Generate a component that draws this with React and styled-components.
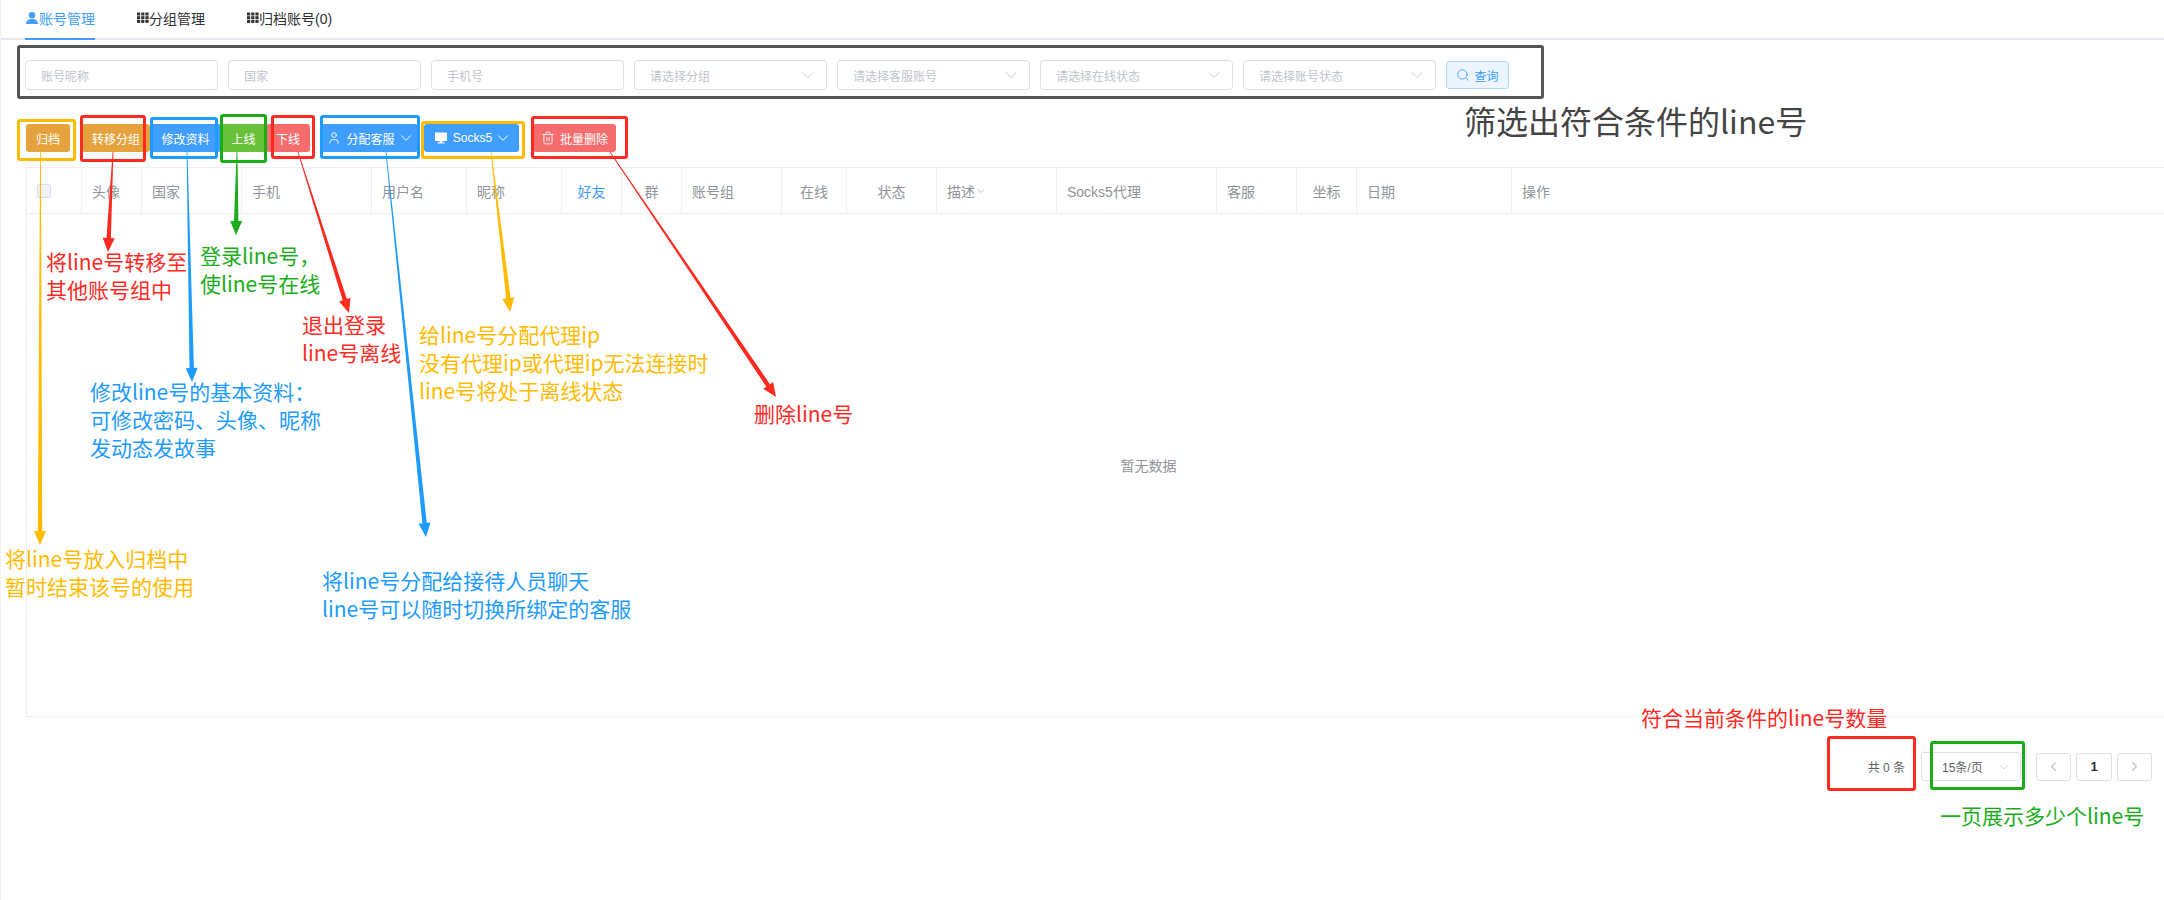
import React from "react";
import styled, { createGlobalStyle } from "styled-components";
import { ChevronDown, ChevronLeft, ChevronRight, Search, Trash2, User } from "lucide-react";

const GlobalStyle = createGlobalStyle`
  html, body {
    margin: 0;
    background: #fff;
  }
  body {
    font-family: "Liberation Sans", "Noto Sans CJK SC", sans-serif;
    overflow: hidden;
  }
  * {
    box-sizing: border-box;
  }
`;

const Page = styled.div`
  position: relative;
  width: 2164px;
  height: 900px;
  padding-left: 1px;
  box-shadow: inset 1px 0 0 #f0f1f4;
`;

const TabBar = styled.div`
  display: flex;
  height: 40px;
  padding-left: 24px;
  border-bottom: 2px solid #e4e7ed;
`;

const Tab = styled.div`
  display: flex;
  align-items: center;
  height: 40px;
  margin-right: 42px;
  padding-bottom: 2px;
  font-size: 14px;
  color: ${(p) => (p.$active ? "#409eff" : "#303133")};
  border-bottom: 2px solid ${(p) => (p.$active ? "#409eff" : "transparent")};
`;

const FilterRow = styled.div`
  display: grid;
  grid-template-columns: repeat(7, 192.5px) 63px;
  column-gap: 10.5px;
  height: 30px;
  margin: 20px 0 0 24px;
`;

const Field = styled.div`
  display: flex;
  align-items: center;
  justify-content: space-between;
  height: 30px;
  padding: 0 8px 0 15px;
  font-size: 12px;
  color: #c0c4cc;
  background: #fff;
  border: 1px solid #dcdfe6;
  border-radius: 4px;
`;

const QueryButton = styled.div`
  display: flex;
  align-items: center;
  justify-content: center;
  gap: 4px;
  height: 28px;
  margin-top: 1px;
  font-size: 12px;
  color: #409eff;
  background: #ecf5ff;
  border: 1px solid #b3d8ff;
  border-radius: 3px;
`;

const Toolbar = styled.div`
  display: flex;
  height: 28px;
  margin: 34px 0 0 25px;
`;

const colors = {
  warning: "#e6a23c",
  primary: "#409eff",
  success: "#67c23a",
  danger: "#f56c6c",
};

const ActionButton = styled.div`
  display: flex;
  align-items: center;
  justify-content: center;
  gap: ${(p) => p.$gap || 0}px;
  flex: none;
  width: ${(p) => p.$w}px;
  margin-left: ${(p) => p.$ml || 0}px;
  font-size: 12px;
  color: #fff;
  background: ${(p) => colors[p.$kind]};
  border-radius: 3px;
`;

const MenuArrow = styled(ChevronDown)`
  margin: 0 -3px;
`;

const TableHead = styled.div`
  display: flex;
  height: 47px;
  margin: 15px 0 0 25px;
  border-top: 1px solid #ebeef5;
  border-bottom: 1px solid #ebeef5;
  border-left: 1px solid #ebeef5;
`;

const HeadCell = styled.div`
  display: flex;
  align-items: center;
  justify-content: ${(p) => (p.$center ? "center" : "flex-start")};
  flex: ${(p) => (p.$w ? "none" : "1")};
  width: ${(p) => (p.$w ? `${p.$w}px` : "auto")};
  padding-left: ${(p) => (p.$center ? 0 : 10)}px;
  font-size: 14px;
  color: ${(p) => (p.$link ? "#409eff" : "#909399")};
  border-right: ${(p) => (p.$w ? "1px solid #ebeef5" : "none")};
`;

const CheckBox = styled.span`
  display: block;
  width: 14px;
  height: 14px;
  background: #edf2fc;
  border: 1px solid #dcdfe6;
  border-radius: 2px;
`;

const EmptyBody = styled.div`
  display: flex;
  align-items: center;
  justify-content: center;
  height: 503px;
  margin-left: 25px;
  padding-left: 106px;
  font-size: 14px;
  color: #909399;
  border-left: 1px solid #ebeef5;
  border-bottom: 1px solid #ebeef5;
`;

const Pager = styled.div`
  display: flex;
  align-items: center;
  justify-content: flex-end;
  height: 29px;
  margin-top: 35px;
  padding-right: 12px;
  font-size: 12px;
  color: #606266;
`;

const Total = styled.span`
  margin-right: 16px;
`;

const PageSize = styled.div`
  display: flex;
  align-items: center;
  justify-content: space-between;
  width: 100px;
  height: 29px;
  margin-right: 15px;
  padding: 0 8px 0 20px;
  border: 1px solid #dcdfe6;
  border-radius: 3px;
`;

const PageButton = styled.div`
  display: flex;
  align-items: center;
  justify-content: center;
  width: ${(p) => p.$w}px;
  height: 28px;
  margin-left: ${(p) => p.$ml || 0}px;
  font-size: 13px;
  font-weight: ${(p) => (p.$current ? 700 : 400)};
  color: ${(p) => (p.$current ? "#303133" : "#c0c4cc")};
  border: 1px solid #dcdfe6;
  border-radius: 3px;
`;

const Overlay = styled.div`
  position: absolute;
  inset: 0;
  pointer-events: none;
`;

const ArrowLayer = styled.svg`
  position: absolute;
  inset: 0;
`;

const Frame = styled.div`
  position: absolute;
  left: ${(p) => p.$x}px;
  top: ${(p) => p.$y}px;
  width: ${(p) => p.$w}px;
  height: ${(p) => p.$h}px;
  border: ${(p) => p.$b || 3}px solid ${(p) => p.$c};
  border-radius: 3px;
`;

const Note = styled.div`
  position: absolute;
  left: ${(p) => p.$x}px;
  top: ${(p) => p.$y}px;
  font-family: "Noto Sans CJK SC", "Liberation Sans", sans-serif;
  font-size: ${(p) => p.$size || 21}px;
  line-height: ${(p) => p.$lh || 28}px;
  color: ${(p) => p.$c};
  white-space: pre;
`;

const RED = "#ff2a1f";
const BLUE = "#1e9bff";
const AMBER = "#ffbb00";
const GREEN = "#1aad19";

const frames = [
  { x: 17, y: 45, w: 1527, h: 54, c: "#555555", b: 3 },
  { x: 17, y: 119, w: 59, h: 42, c: AMBER },
  { x: 80, y: 115, w: 66, h: 47, c: RED },
  { x: 150, y: 117, w: 68, h: 42, c: BLUE },
  { x: 220, y: 114, w: 47, h: 49, c: GREEN },
  { x: 271, y: 115, w: 44, h: 44, c: RED },
  { x: 320, y: 115, w: 100, h: 44, c: BLUE },
  { x: 421, y: 121, w: 104, h: 38, c: AMBER },
  { x: 531, y: 116, w: 97, h: 43, c: RED },
  { x: 1827, y: 736, w: 89, h: 55, c: RED },
  { x: 1930, y: 741, w: 95, h: 49, c: GREEN },
];

const notes = [
  { x: 46, y: 247, c: RED, text: "将line号转移至\n其他账号组中" },
  { x: 200, y: 241, c: GREEN, text: "登录line号，\n使line号在线" },
  { x: 302, y: 310, c: RED, text: "退出登录\nline号离线" },
  { x: 419, y: 320, c: AMBER, text: "给line号分配代理ip\n没有代理ip或代理ip无法连接时\nline号将处于离线状态" },
  { x: 90, y: 377, c: BLUE, text: "修改line号的基本资料：\n可修改密码、头像、昵称\n发动态发故事" },
  { x: 754, y: 399, c: RED, text: "删除line号" },
  { x: 5, y: 544, c: AMBER, text: "将line号放入归档中\n暂时结束该号的使用" },
  { x: 322, y: 566, c: BLUE, text: "将line号分配给接待人员聊天\nline号可以随时切换所绑定的客服" },
  { x: 1641, y: 703, c: RED, text: "符合当前条件的line号数量" },
  { x: 1940, y: 801, c: GREEN, text: "一页展示多少个line号" },
  { x: 1464, y: 98, c: "#444444", size: 32, lh: 44, text: "筛选出符合条件的line号" },
];

const arrows = [
  { from: [40.5, 152], to: [40, 545], c: AMBER },
  { from: [113, 152], to: [108, 252], c: RED },
  { from: [187, 152], to: [192, 382], c: BLUE },
  { from: [237, 152], to: [236, 235], c: GREEN },
  { from: [298, 152], to: [349, 313], c: RED },
  { from: [386, 152], to: [426, 537], c: BLUE },
  { from: [491, 152], to: [510, 312], c: AMBER },
  { from: [610, 152], to: [776, 397], c: RED },
];

// tapered shaft that thickens towards a triangular head
const arrowPoints = ({ from, to }) => {
  const [x1, y1] = from;
  const [x2, y2] = to;
  const len = Math.hypot(x2 - x1, y2 - y1);
  const ux = (x2 - x1) / len;
  const uy = (y2 - y1) / len;
  const nx = -uy;
  const ny = ux;
  const bx = x2 - ux * 14;
  const by = y2 - uy * 14;
  const pts = [
    [x1 + nx * 0.4, y1 + ny * 0.4],
    [bx + nx * 2.2, by + ny * 2.2],
    [bx + nx * 6, by + ny * 6],
    [x2, y2],
    [bx - nx * 6, by - ny * 6],
    [bx - nx * 2.2, by - ny * 2.2],
    [x1 - nx * 0.4, y1 - ny * 0.4],
  ];
  return pts.map((p) => p.join(",")).join(" ");
};

const columns = [
  { w: 55, check: true },
  { w: 60, label: "头像" },
  { w: 100, label: "国家" },
  { w: 130, label: "手机" },
  { w: 95, label: "用户名" },
  { w: 95, label: "昵称" },
  { w: 60, label: "好友", center: true, link: true },
  { w: 60, label: "群", center: true },
  { w: 100, label: "账号组" },
  { w: 65, label: "在线", center: true },
  { w: 90, label: "状态", center: true },
  { w: 120, label: "描述", sort: true },
  { w: 160, label: "Socks5代理" },
  { w: 80, label: "客服" },
  { w: 60, label: "坐标", center: true },
  { w: 155, label: "日期" },
  { label: "操作" },
];

const fields = ["账号昵称", "国家", "手机号"];
const selects = ["请选择分组", "请选择客服账号", "请选择在线状态", "请选择账号状态"];

const GridIcon = () => (
  <svg width="12" height="12" viewBox="0 0 12 12" fill="#303133">
    {[0, 4.2, 8.4].map((x) =>
      [0.5, 4.2, 7.9].map((y) => <rect key={`${x}-${y}`} x={x} y={y} width="3.2" height="3" />)
    )}
  </svg>
);

const UserIcon = () => (
  <svg width="14" height="14" viewBox="0 0 14 14" fill="#409eff">
    <circle cx="7" cy="4.2" r="3.2" />
    <path d="M1 13c0-3.4 2.6-5 6-5s6 1.600 6 5z" />
  </svg>
);

const MonitorIcon = () => (
  <svg width="14" height="14" viewBox="0 0 14 14" fill="#fff">
    <rect x="1" y="1.500" width="12" height="8.500" rx="0.8" />
    <rect x="5.500" y="10" width="3" height="1.800" />
    <rect x="3.500" y="11.500" width="7" height="1" />
  </svg>
);

const App = () => {
  return (
    <Page>
      <GlobalStyle />
      <TabBar>
        <Tab $active>
          <UserIcon />
          账号管理
        </Tab>
        <Tab>
          <GridIcon />
          分组管理
        </Tab>
        <Tab>
          <GridIcon />
          归档账号(0)
        </Tab>
      </TabBar>

      <FilterRow>
        {fields.map((text) => (
          <Field key={text}>{text}</Field>
        ))}
        {selects.map((text) => (
          <Field key={text}>
            {text}
            <ChevronDown size={20} strokeWidth={1} />
          </Field>
        ))}
        <QueryButton>
          <Search size={14} strokeWidth={1.5} />
          查询
        </QueryButton>
      </FilterRow>

      <Toolbar>
        <ActionButton $kind="warning" $w={44}>归档</ActionButton>
        <ActionButton $kind="warning" $w={68} $ml={12}>转移分组</ActionButton>
        <ActionButton $kind="primary" $w={71}>修改资料</ActionButton>
        <ActionButton $kind="success" $w={45}>上线</ActionButton>
        <ActionButton $kind="danger" $w={44}>下线</ActionButton>
        <ActionButton $kind="primary" $w={97} $ml={11} $gap={5}>
          <User size={14} strokeWidth={1.5} />
          分配客服
          <MenuArrow size={18} strokeWidth={1.3} />
        </ActionButton>
        <ActionButton $kind="primary" $w={95} $ml={6} $gap={5}>
          <MonitorIcon />
          Socks5
          <MenuArrow size={18} strokeWidth={1.3} />
        </ActionButton>
        <ActionButton $kind="danger" $w={83} $ml={14} $gap={5}>
          <Trash2 size={14} strokeWidth={1.5} />
          批量删除
        </ActionButton>
      </Toolbar>

      <TableHead>
        {columns.map((col, index) => (
          <HeadCell key={index} $w={col.w} $center={col.center} $link={col.link}>
            {col.check && <CheckBox />}
            {col.label}
            {col.sort && <ChevronDown size={12} strokeWidth={1} />}
          </HeadCell>
        ))}
      </TableHead>
      <EmptyBody>暂无数据</EmptyBody>

      <Pager>
        <Total>共 0 条</Total>
        <PageSize>
          15条/页
          <ChevronDown size={16} strokeWidth={1} color="#c0c4cc" />
        </PageSize>
        <PageButton $w={35}>
          <ChevronLeft size={15} />
        </PageButton>
        <PageButton $w={36} $ml={5} $current>1</PageButton>
        <PageButton $w={35} $ml={5}>
          <ChevronRight size={15} />
        </PageButton>
      </Pager>

      <Overlay>
        <ArrowLayer width="2164" height="900">
          {arrows.map((arrow, index) => (
            <polygon key={index} points={arrowPoints(arrow)} fill={arrow.c} />
          ))}
        </ArrowLayer>
        {frames.map((f, index) => (
          <Frame key={index} $x={f.x} $y={f.y} $w={f.w} $h={f.h} $c={f.c} $b={f.b} />
        ))}
        {notes.map((n) => (
          <Note key={n.text} $x={n.x} $y={n.y} $c={n.c} $size={n.size} $lh={n.lh}>
            {n.text}
          </Note>
        ))}
      </Overlay>
    </Page>
  );
};

export default App;
